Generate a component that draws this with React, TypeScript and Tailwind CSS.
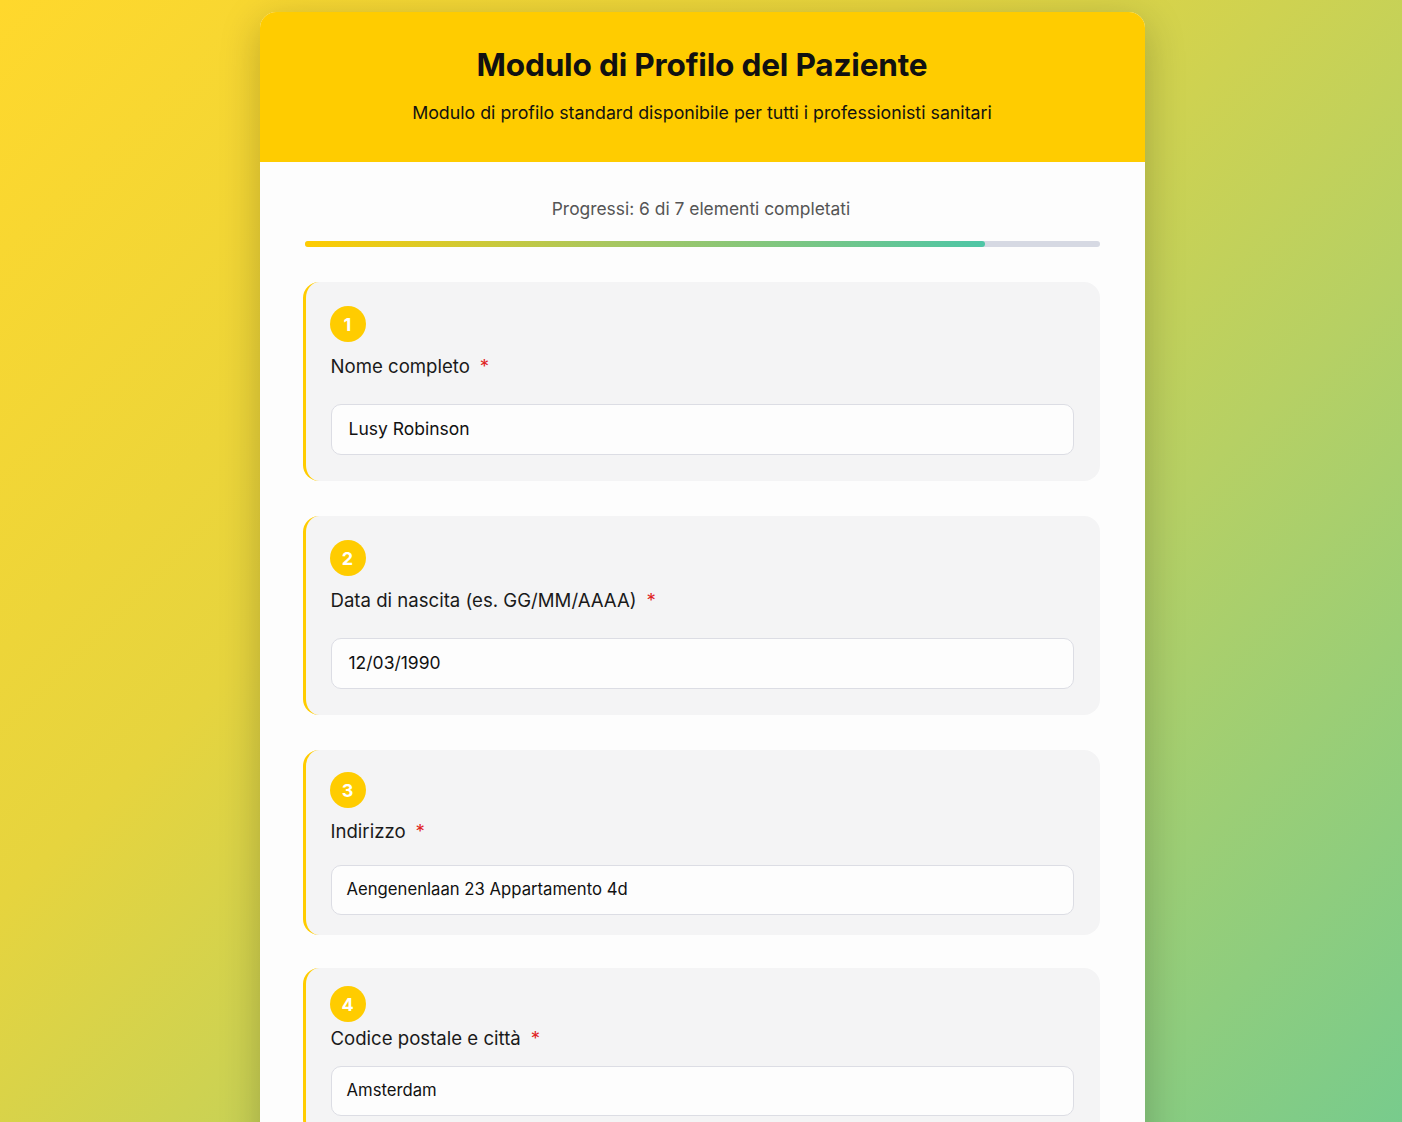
const fields = [
  {
    n: 1,
    label: "Nome completo",
    value: "Lusy Robinson",
    box: "mt-[35px] pt-[24px] pb-[26px]",
    labelGap: "mt-[12px]",
    inputGap: "mt-[26px]",
    input: "h-[51px] pl-[17px] text-[17.5px]",
  },
  {
    n: 2,
    label: "Data di nascita (es. GG/MM/AAAA)",
    value: "12/03/1990",
    box: "mt-[35px] pt-[24px] pb-[26px]",
    labelGap: "mt-[12px]",
    inputGap: "mt-[26px]",
    input: "h-[51px] pl-[17px] text-[17.5px]",
  },
  {
    n: 3,
    label: "Indirizzo",
    value: "Aengenenlaan 23 Appartamento 4d",
    box: "mt-[35px] pt-[22px] pb-[20px]",
    labelGap: "mt-[11px]",
    inputGap: "mt-[22px]",
    input: "h-[50px] pl-[15px] text-[16.7px]",
  },
  {
    n: 4,
    label: "Codice postale e città",
    value: "Amsterdam",
    box: "mt-[33px] pt-[18px] pb-[20px]",
    labelGap: "mt-[4px]",
    inputGap: "mt-[16px]",
    input: "h-[50px] pl-[15px] text-[16.7px]",
  },
];

export default function App() {
  return (
    <div className="min-h-screen overflow-hidden bg-[linear-gradient(135deg,#ffd82c_0%,#e6d43e_35%,#b6d064_65%,#74cb8f_100%)] pt-[12px] font-['Inter',sans-serif]">
      <div className="mx-auto w-[885px] translate-x-[1px] overflow-hidden rounded-t-[16px] bg-[#fdfdfd] shadow-[0_10px_40px_rgba(0,0,0,0.22)]">
        <header className="flex h-[150px] flex-col items-center bg-[#ffcc00] pt-[33px]">
          <h1 className="text-[31.6px] font-bold leading-[40px] tracking-[-0.2px] text-[#111]">
            Modulo di Profilo del Paziente
          </h1>
          <p className="mt-[17px] text-[17.8px] leading-[22px] text-[#111]">
            Modulo di profilo standard disponibile per tutti i professionisti sanitari
          </p>
        </header>

        <main className="pb-10 pl-[43px] pr-[45px] pt-[36px]">
          <p className="text-center text-[17.4px] leading-[22px] text-[#555]">
            Progressi: 6 di 7 elementi completati
          </p>
          <div className="ml-[2px] mt-[21px] h-[6px] rounded-full bg-[#d6d9e3]">
            <div className="h-full w-[85.6%] rounded-full bg-[linear-gradient(90deg,#ffcc00_0%,#a8c760_45%,#4ec6a6_100%)]" />
          </div>

          <div className="flex flex-col">
            {fields.map((f) => (
              <section
                key={f.n}
                className={`rounded-[16px] border-l-[3px] border-[#ffcc00] bg-[#f4f4f5] pl-[25px] pr-[26px] ${f.box}`}
              >
                <div className="flex h-[36px] w-[36px] -translate-x-[1px] items-center justify-center rounded-full bg-[#ffcc00] text-[18px] font-bold text-white">
                  {f.n}
                </div>
                <label className={`block text-[18.6px] leading-[24px] text-[#1a1a1a] ${f.labelGap}`}>
                  {f.label}
                  <span className="ml-[10px] text-[#e02424]">*</span>
                </label>
                <div
                  className={`flex items-center rounded-[10px] border border-[#dcdde4] bg-[#fdfdfd] text-[#111] ${f.inputGap} ${f.input}`}
                >
                  {f.value}
                </div>
              </section>
            ))}
          </div>
        </main>
      </div>
    </div>
  );
}
